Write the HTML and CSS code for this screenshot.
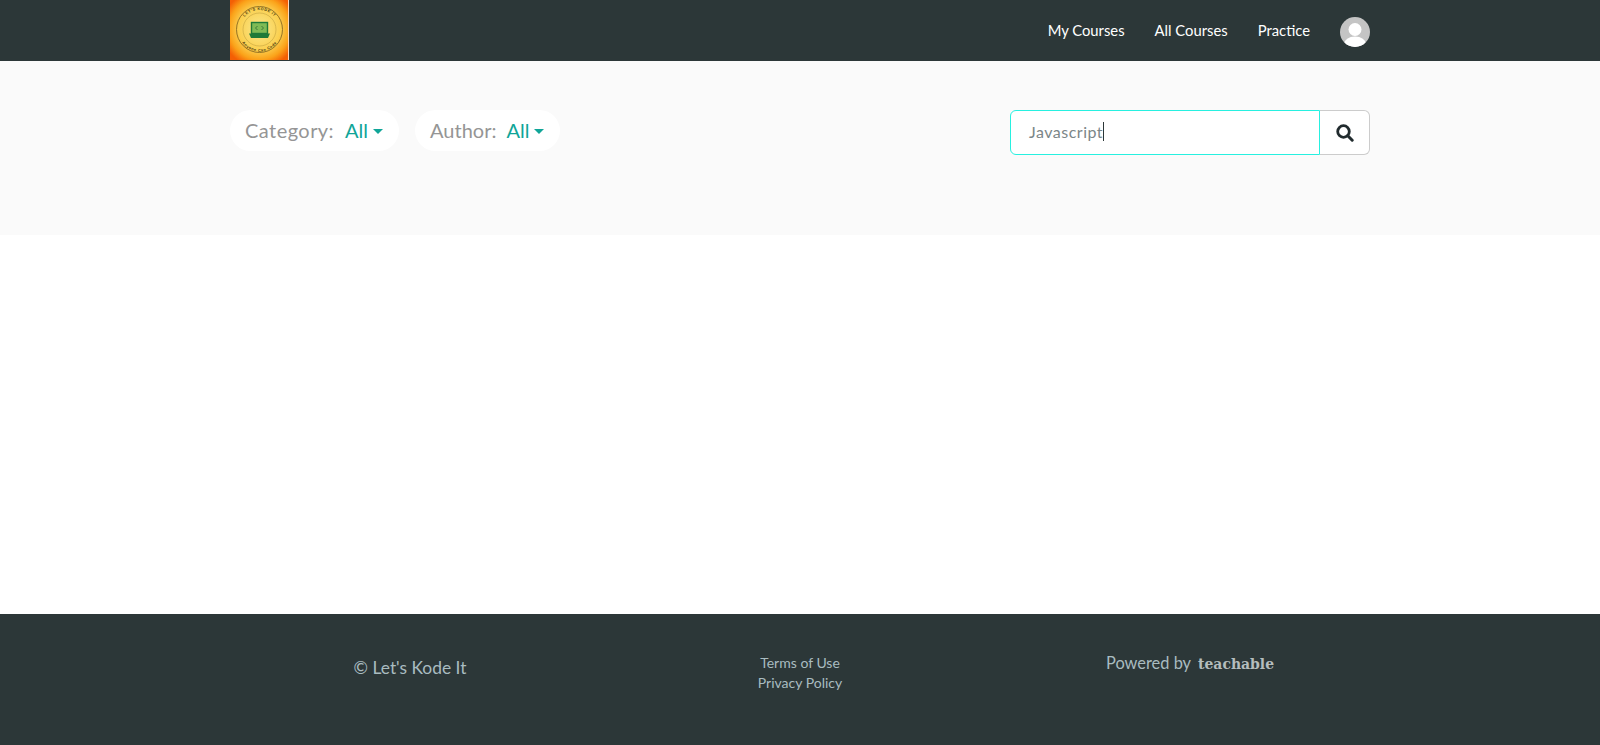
FILE: index.html
```html
<!DOCTYPE html>
<html lang="en">
<head>
<meta charset="utf-8">
<title>All Courses</title>
<link rel="stylesheet" href="styles.css">
</head>
<body>
<header class="topbar">
  <div class="container topbar-inner">
    <svg class="logo" width="59" height="60" viewBox="0 0 59 60" aria-label="Let's Kode It">
      <defs>
        <radialGradient id="sun" cx="50%" cy="48%" r="64%">
          <stop offset="0" stop-color="#f8e88e"/>
          <stop offset="0.55" stop-color="#fbd050"/>
          <stop offset="0.8" stop-color="#fba31a"/>
          <stop offset="1" stop-color="#f45f04"/>
        </radialGradient>
        <path id="arcTop" d="M10 29.500 A19.500 19.500 0 0 1 49 29.500"/>
        <path id="arcBottom" d="M7.500 29.500 A22 22 0 0 0 51.500 29.500"/>
      </defs>
      <rect width="59" height="60" fill="url(#sun)"/>
      <rect x="58" width="1" height="60" fill="#fbd9c0"/>
      <circle cx="29.500" cy="29.500" r="23" fill="none" stroke="#8a6a20" stroke-width="0.9"/>
      <circle cx="29.500" cy="29.500" r="16.500" fill="none" stroke="#a98a30" stroke-width="0.4"/>
      <text class="logo-text"><textPath href="#arcTop" startOffset="50%" text-anchor="middle">LET'S KODE IT</textPath></text>
      <text class="logo-text"><textPath href="#arcBottom" startOffset="50%" text-anchor="middle">Anyone Can Code</textPath></text>
      <rect x="21.500" y="22.500" width="16" height="11" fill="#7fbb55" stroke="#1f7a38" stroke-width="1.400"/>
      <path d="M19 33.500 H40 L38 38 H21 Z" fill="#1f7a38"/>
      <path d="M27.500 26 L25.500 28 L27.500 30 M31.500 26 L33.500 28 L31.500 30" fill="none" stroke="#1f5f2c" stroke-width="0.7"/>
    </svg>
    <nav class="nav">
      <a class="nav-link">My Courses</a>
      <a class="nav-link">All Courses</a>
      <a class="nav-link">Practice</a>
      <svg class="avatar" width="30" height="30" viewBox="0 0 30 30" aria-hidden="true">
        <defs><clipPath id="round"><circle cx="15" cy="15" r="15"/></clipPath></defs>
        <g clip-path="url(#round)">
          <rect width="30" height="30" fill="#c4c4c4"/>
          <circle cx="15" cy="12.500" r="6.500" fill="#fff"/>
          <ellipse cx="15" cy="27" rx="11" ry="7.500" fill="#fff"/>
        </g>
      </svg>
    </nav>
  </div>
</header>

<section class="filters">
  <div class="container filters-inner">
    <div class="pills">
      <div class="pill"><span class="pill-label pill-label-wide">Category:</span><span class="pill-value">All</span><span class="caret"></span></div>
      <div class="pill"><span class="pill-label">Author:</span><span class="pill-value">All</span><span class="caret"></span></div>
    </div>
    <form class="search">
      <div class="search-input"><span class="search-text">Javascript</span><span class="cursor"></span></div>
      <div class="search-btn">
        <svg width="18" height="18" viewBox="0 0 18 18" aria-hidden="true">
          <circle cx="7.500" cy="7.500" r="5.800" fill="none" stroke="#212b2e" stroke-width="2.800"/>
          <path d="M11.800 11.800 L16.200 16.200" fill="none" stroke="#212b2e" stroke-width="3" stroke-linecap="round"/>
        </svg>
      </div>
    </form>
  </div>
</section>

<main class="content"></main>

<footer class="footer">
  <div class="container footer-inner">
    <div class="copyright">© Let's Kode It</div>
    <div class="legal"><a>Terms of Use</a><a>Privacy Policy</a></div>
    <div class="powered"><span>Powered by</span><span class="brand">teachable</span></div>
  </div>
</footer>
</body>
</html>
```

FILE: styles.css
```css
* { box-sizing: border-box; }
html, body { margin: 0; height: 100%; }
body {
  display: flex;
  flex-direction: column;
  height: 745px;
  overflow: hidden;
  background: #fff;
  font-family: "Lato", "Liberation Sans", sans-serif;
}
.container { width: 1140px; margin: 0 auto; }

.topbar { height: 61px; background: #2c3738; flex: none; }
.topbar-inner { display: flex; align-items: flex-start; justify-content: space-between; height: 100%; }
.logo { display: block; }
.logo-text { font-family: "Liberation Sans", sans-serif; font-size: 3.800px; font-weight: 700; fill: #4a3a10; letter-spacing: 0.5px; }
.nav { display: flex; align-items: center; height: 100%; }
.nav-link { color: #fff; font-size: 14.800px; margin-right: 30px; position: relative; top: -1px; }
.avatar { display: block; position: relative; top: 1px; }

.filters { height: 174px; background: #fafafa; flex: none; }
.filters-inner { display: flex; justify-content: space-between; align-items: flex-start; padding-top: 49px; }
.pills { display: flex; gap: 16px; }
.pill {
  display: flex;
  align-items: center;
  height: 41px;
  padding: 0 16px 2px 15px;
  background: #fff;
  border-radius: 21px;
  font-size: 20px;
}
.pill-label { color: #959595; margin-right: 10px; }
.pill-label-wide { letter-spacing: 0.45px; margin-right: 11px; }
.pill-value { color: #10a598; margin-right: 5px; }
.caret { width: 0; height: 0; border-left: 5.500px solid transparent; border-right: 5.500px solid transparent; border-top: 5.500px solid #10a598; margin-top: 4px; }

.search { display: flex; width: 360px; height: 45px; }
.search-input {
  flex: 1;
  display: flex;
  align-items: center;
  padding: 0 0 2px 18px;
  background: #fff;
  border: 1px solid #27f0e0;
  border-radius: 6px 0 0 6px;
  font-size: 16px;
  letter-spacing: 0.5px;
  color: #7b8688;
}
.cursor { width: 1px; height: 19px; background: #2c3738; }
.search-btn {
  width: 50px;
  display: flex;
  align-items: center;
  justify-content: center;
  background: #fff;
  border: 1px solid #ccc;
  border-left: 0;
  border-radius: 0 6px 6px 0;
}

.content { flex: 1; background: #fff; }

.footer { height: 131px; background: #2c3738; flex: none; }
.footer-inner { display: grid; grid-template-columns: repeat(3, 1fr); width: 1170px; }
.copyright { text-align: center; padding-top: 43px; font-size: 17.400px; color: #a9bcc0; }
.legal { display: flex; flex-direction: column; align-items: center; padding-top: 39px; font-size: 14px; line-height: 20px; color: #a9bcc0; }
.powered { display: flex; justify-content: center; align-items: baseline; gap: 7px; padding-top: 39px; font-size: 16.400px; color: #a9bcc0; }
.brand { font-family: "DejaVu Serif", serif; font-size: 15.500px; font-weight: 700; font-stretch: condensed; color: #b5bdbd; }
```
